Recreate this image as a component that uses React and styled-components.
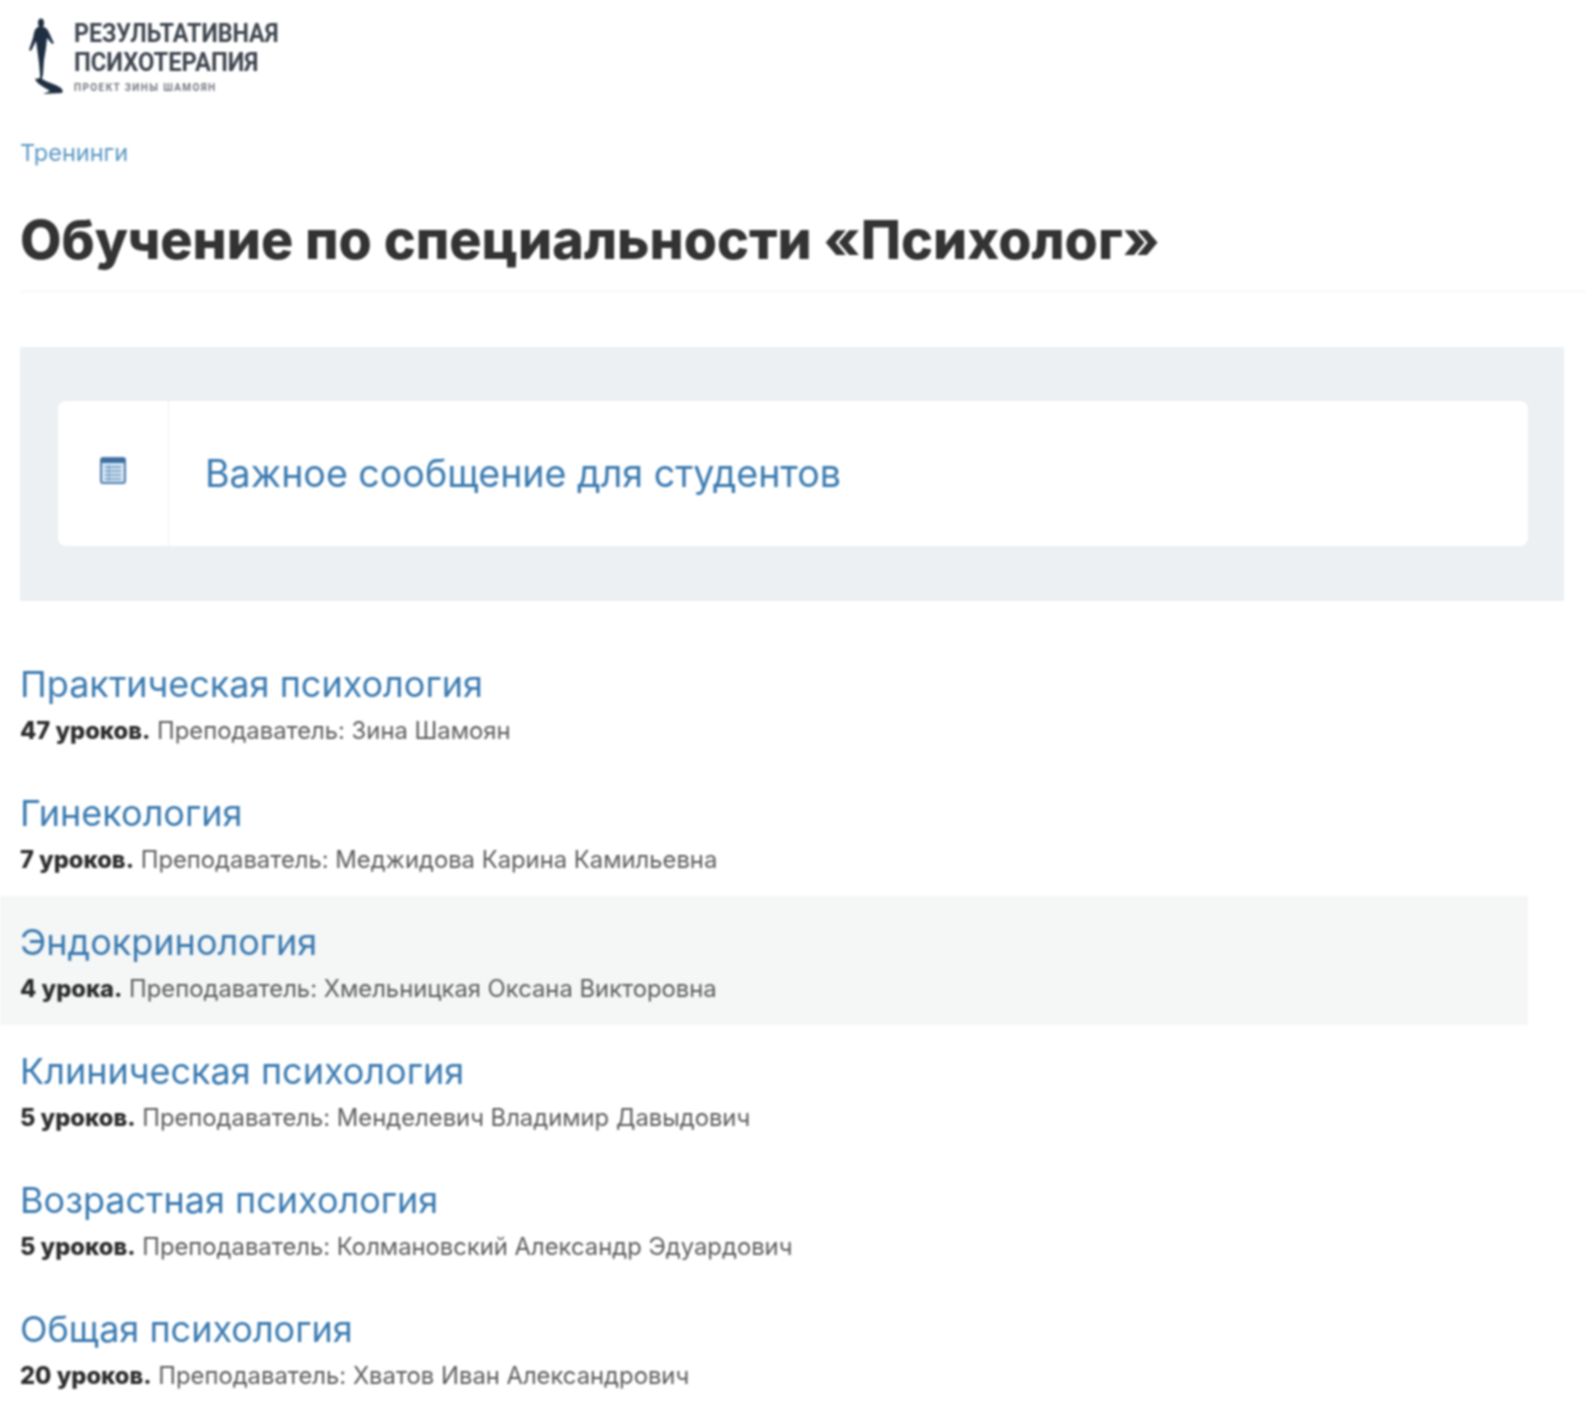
import React from "react";
import styled, { createGlobalStyle } from "styled-components";

const courses = [
  { title: "Практическая психология", count: "47 уроков.", teacher: "Зина Шамоян" },
  { title: "Гинекология", count: "7 уроков.", teacher: "Меджидова Карина Камильевна" },
  { title: "Эндокринология", count: "4 урока.", teacher: "Хмельницкая Оксана Викторовна", active: true },
  { title: "Клиническая психология", count: "5 уроков.", teacher: "Менделевич Владимир Давыдович" },
  { title: "Возрастная психология", count: "5 уроков.", teacher: "Колмановский Александр Эдуардович" },
  { title: "Общая психология", count: "20 уроков.", teacher: "Хватов Иван Александрович" }
];

const GlobalStyle = createGlobalStyle`
  html, body {
    margin: 0;
    padding: 0;
    background: #fff;
  }
  body {
    font-family: "Inter", "Noto Sans", sans-serif;
    color: #333;
  }
`;

// the source picture is a soft, upscaled screenshot
const Page = styled.div`
  width: 1586px;
  height: 1426px;
  overflow: hidden;
  filter: blur(0.8px);
`;

const Logo = styled.div`
  display: flex;
  gap: 10px;
  padding: 18px 0 0 26px;
  height: 79px;
`;

const LogoText = styled.div`
  display: flex;
  flex-direction: column;
  font-family: "Roboto", sans-serif;
  font-weight: 700;
  color: #3f4650;
  font-size: 25px;
  line-height: 29px;
  padding-top: 1px;
`;

const LogoLine = styled.div`
  transform: scaleX(${(p) => p.$scale});
  transform-origin: left center;
  white-space: nowrap;
`;

const LogoSub = styled.div`
  font-size: 10px;
  line-height: 13px;
  margin-top: 4px;
  color: #6f747c;
  letter-spacing: 1.4px;
  white-space: nowrap;
`;

const Breadcrumb = styled.a`
  display: block;
  margin: 42px 0 0 20px;
  font-size: 23.5px;
  line-height: 28px;
  color: #5a97c2;
`;

const Title = styled.h1`
  margin: 42px 0 0 20px;
  padding: 0 0 20px;
  font-size: 53.8px;
  line-height: 62px;
  font-weight: 800;
  color: #333;
  border-bottom: 1px solid #f0f0f0;
`;

const Notice = styled.div`
  margin: 55px 22px 0 20px;
  padding: 54px 36px 55px 38px;
  background: #ecf0f2;
`;

const NoticeCard = styled.div`
  display: flex;
  height: 145px;
  background: #fff;
  border-radius: 8px;
`;

const NoticeIcon = styled.div`
  flex: 0 0 111px;
  display: flex;
  align-items: center;
  justify-content: center;
  border-right: 1px solid #eef0f2;
  padding-bottom: 6px;
  box-sizing: border-box;
`;

const NoticeText = styled.div`
  display: flex;
  align-items: center;
  padding-left: 36px;
  font-size: 37.6px;
  color: #3a7ab0;
`;

const List = styled.div`
  margin-top: 37px;
  width: 1528px;
`;

const Row = styled.div`
  height: 129px;
  box-sizing: border-box;
  padding: 24px 0 0 20px;
  background: ${(p) => (p.$active ? "#f5f6f6" : "transparent")};
`;

const RowTitle = styled.div`
  font-size: 36px;
  line-height: 44px;
  color: #3a7ab0;
`;

const RowMeta = styled.div`
  margin-top: 10px;
  font-size: 23.8px;
  line-height: 30px;
  color: #5c5c5c;
`;

const Count = styled.b`
  color: #2b2b2b;
  font-size: 23.7px;
  font-weight: 800;
`;

const Figure = () => (
  <svg width="38" height="80" viewBox="0 0 38 80" fill="#1f2f42">
    <ellipse cx="15" cy="5" rx="3" ry="4.5" />
    <path d="M12 9 C8 11 8 16 7 20 L3 32 L5 33 L10 23 L11 30 L13 45 L14 56 L17 56 L18 42 L20 30 L21 20 L26 26 L28 25 C24 18 23 11 18 9 Z" />
    <path d="M14 56 L17 56 L16 61 C22 65 30 66 35 70 C37 72 37 74 36 75 L17 76 L24 73 C18 69 11 66 9 61 L14 60 Z" />
  </svg>
);

const TableIcon = () => (
  <svg width="26" height="27" viewBox="0 0 26 27">
    <rect x="1" y="1" width="24" height="25" rx="2" fill="#d5e4f2" stroke="#4d7fae" strokeWidth="2" />
    <rect x="1" y="1" width="24" height="5" fill="#3f6f9f" />
    <path d="M5 10h16M5 14h16M5 18h16M5 22h16" stroke="#6f9ac2" strokeWidth="1.5" />
    <path d="M9 8v16" stroke="#6f9ac2" strokeWidth="1" />
  </svg>
);

export default function App() {
  return (
    <Page>
      <GlobalStyle />
      <Logo>
        <Figure />
        <LogoText>
          <LogoLine $scale={0.93}>РЕЗУЛЬТАТИВНАЯ</LogoLine>
          <LogoLine $scale={0.95}>ПСИХОТЕРАПИЯ</LogoLine>
          <LogoSub>ПРОЕКТ ЗИНЫ ШАМОЯН</LogoSub>
        </LogoText>
      </Logo>
      <Breadcrumb>Тренинги</Breadcrumb>
      <Title>Обучение по специальности «Психолог»</Title>
      <Notice>
        <NoticeCard>
          <NoticeIcon>
            <TableIcon />
          </NoticeIcon>
          <NoticeText>Важное сообщение для студентов</NoticeText>
        </NoticeCard>
      </Notice>
      <List>
        {courses.map((course) => (
          <Row key={course.title} $active={course.active}>
            <RowTitle>{course.title}</RowTitle>
            <RowMeta>
              <Count>{course.count}</Count> Преподаватель: {course.teacher}
            </RowMeta>
          </Row>
        ))}
      </List>
    </Page>
  );
}
